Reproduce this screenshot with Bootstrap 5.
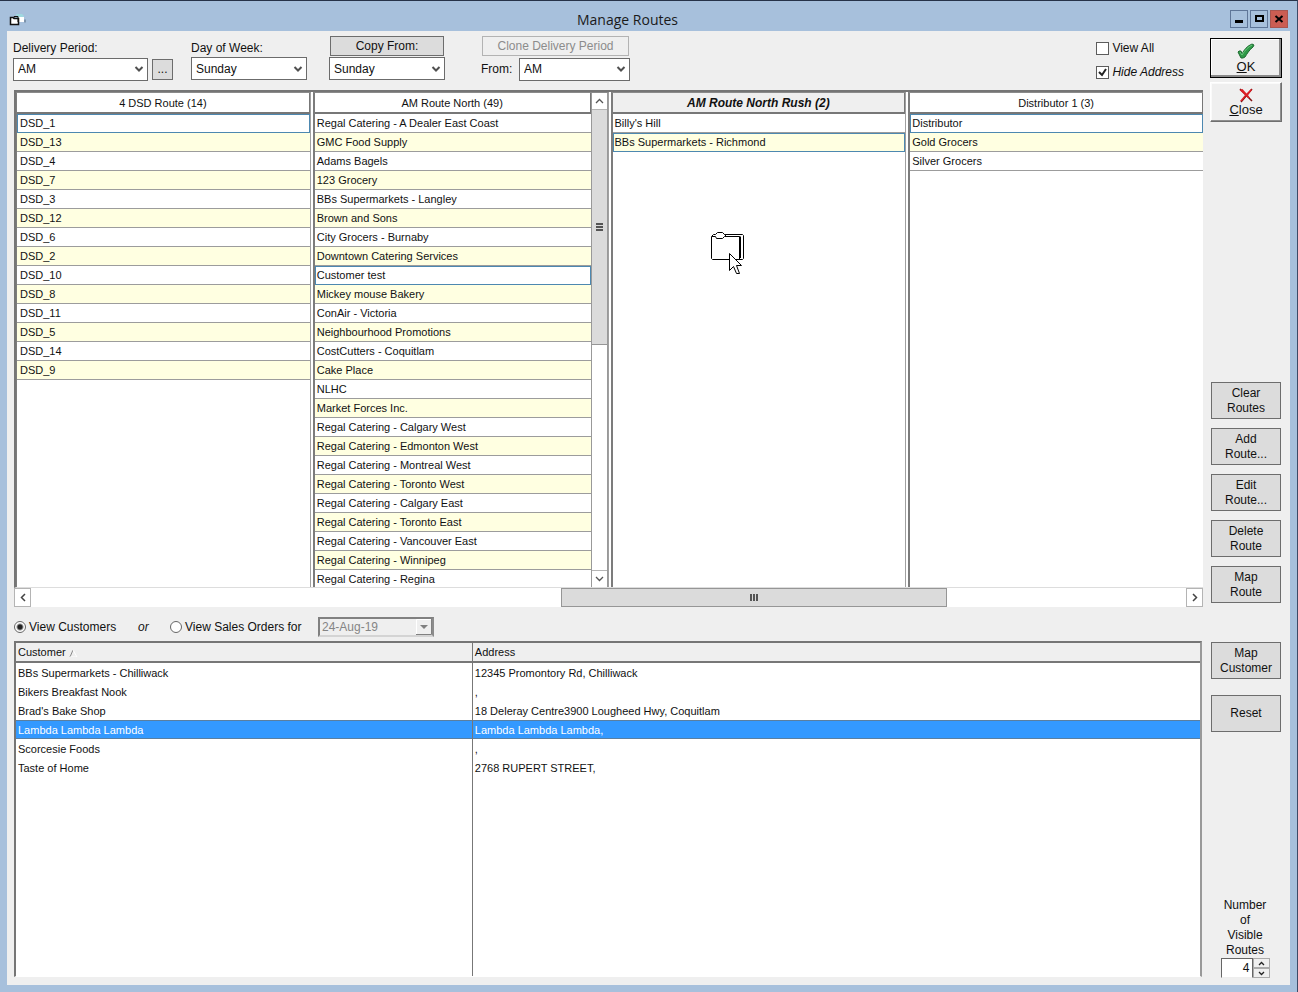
<!DOCTYPE html>
<html lang="en">
<head>
<meta charset="utf-8">
<meta name="viewport" content="width=device-width, initial-scale=1">
<title>Manage Routes</title>
<link href="https://cdn.jsdelivr.net/npm/bootstrap@5.3.0/dist/css/bootstrap.min.css" rel="stylesheet">
<style>
body { font-family: "Liberation Sans", Arial, sans-serif; font-size: 12px; line-height: 15px; color: #111; background: #a7c0dc; }
.app-window { height: 100vh; min-height: 720px; border-top: 1px solid #263248; border-right: 1px solid #3d4a66; padding: 0 7px 7px 7px; }
.title-bar { height: 30px; flex: none; padding: 7px 42px 0 0; }
.title-text { font: 400 14px/20px "Open Sans", sans-serif; color: #1a1a1a; }
.app-icon { left: 2px; top: 12px; }
.win-controls { right: 2px; top: 9px; gap: 2px; }
.win-btn { width: 18px; height: 18px; padding: 0; border: 1px solid #5f7698; background: transparent; display: flex; align-items: center; justify-content: center; }
.win-close { background: #cb5d52; border-color: #a8554f; }
.client { background: #efefef; min-height: 0; }
.upper { flex: 576 1 0; }
.lower { flex: 378 1 0; }
.upper-main { padding-left: 7px; }
.lower-main { padding: 0 0 8px 7px; }
.side { width: 87px; flex: none; padding: 0 8px 0 7px; }
.upper .side { padding-top: 7px; padding-bottom: 4px; }
.lower .side { padding-top: 35px; padding-bottom: 7px; }
.route-actions { gap: 9px; }

.tool-strip { height: 59px; flex: none; padding: 5px 19px 0 6px; margin-left: -7px; }
.tool-group { display: grid; grid-template-rows: 20px 24px; row-gap: 1px; }
.tool-group > label { padding-top: 5px; }
.period-group { width: 178px; }
.day-group { width: 138px; }
.copy-group { width: 152px; }
.copy-btn { width: 114px; margin-left: 1px; }
.clone-btn { width: 147px; margin-left: 1px; }
.more-btn { width: 21px; height: 21px; }
.w-period { width: 135px; }
.w-day { width: 116px; }
.w-from { width: 111px; }
.from-line { width: 149px; }
.form-select.pick { font-size: 12px; line-height: 16px; height: 23px; padding: 0 20px 0 4px; border: 1px solid #6b6b6b; border-radius: 0; color: #111; background-color: #fff;
  background-position: right 2px center; background-size: 12px 12px;
  background-image: url("data:image/svg+xml,%3csvg xmlns='http://www.w3.org/2000/svg' viewBox='0 0 12 12'%3e%3cpath d='M2.5 4l3.5 3.5L9.5 4' fill='none' stroke='%23505050' stroke-width='2'/%3e%3c/svg%3e"); }
.grey-btn { font-size: 12px; line-height: 15px; padding: 0; color: #111; background: #dcdcdc; border: 1px solid #6d6d6d; border-radius: 0; }
.grey-btn:disabled { color: #8c8c8c; background: #efefef; border-color: #b3b3b3; opacity: 1; }
.checks { gap: 9px; padding-top: 5px; }
.mark-label { display: flex; align-items: center; gap: 3px; }
.tick { appearance: none; width: 13px; height: 13px; margin: 0; border: 1px solid #5c5c5c; background: #fff center/11px no-repeat; flex: none; }
.tick:checked { background-image: url("data:image/svg+xml,%3csvg xmlns='http://www.w3.org/2000/svg' viewBox='0 0 11 11'%3e%3cpath d='M2 5l3 3L9 2' fill='none' stroke='%23222' stroke-width='2'/%3e%3c/svg%3e"); }
.dot { appearance: none; width: 12px; height: 12px; margin: 0; border: 1px solid #666; border-radius: 50%; background: #fff; flex: none; }
.dot:checked { background: radial-gradient(circle, #222 2px, #fff 4px); }

.routes { flex: 1 1 0; border-top: 2px solid #757575; border-left: 2px solid #757575; border-bottom: 1px solid #ddd; background: #fff; }
.route { flex: 1 1 0; min-width: 0; border-left: 2px solid #7c7c7c; border-top: 1px solid #8a8a8a; border-right: 1px solid #a0a0a0; }
.route:first-child { border-left-width: 1px; }
.route + .route { margin-left: 2px; }
.route:last-child { border-right: 0; }
.grid-table { width: 100%; table-layout: fixed; border-collapse: separate; border-spacing: 0; font-size: 11px; line-height: 18px; }
.grid-table th, .grid-table td { padding: 0 2px; height: 19px; white-space: nowrap; overflow: hidden; }
.route-table td { border-bottom: 1px solid #9c9c9c; background: #fff; }
.route:first-child td { padding-left: 3px; }
.route-table tbody tr:nth-child(even) td { background: #ffffe1; }
.route-table th { height: 21px; text-align: center; font-weight: 400; border: 1px solid #777; border-width: 0 1px 2px 0; }
.route-table .target { font-size: 12px; font-weight: 700; font-style: italic; background: #efefef; }
.route-table .picked { border-bottom-color: #4d88b0; box-shadow: inset 1px 1px #4d88b0, inset -1px 0 #4d88b0; }
.drag-cursor { left: 97px; top: 138px; pointer-events: none; }

.v-scroll { width: 17px; flex: none; border: 1px solid #999; border-width: 0 1px; }
.h-scroll { height: 19px; flex: none; background: #fff; }
.scroll-btn { padding: 0; border: 1px solid #b4b4b4; background: #fff; display: flex; align-items: center; justify-content: center; flex: none; }
.v-scroll .scroll-btn { height: 17px; border-width: 0 0 1px; }
.v-scroll .scroll-btn:last-child { border-width: 1px 0 0; }
.h-scroll .scroll-btn { width: 17px; }
.thumb { background: #dbdbdb; border: 1px solid #969696; display: flex; align-items: center; justify-content: center; }
.v-scroll .thumb { border-width: 0 0 1px; flex: 235 1 0; }
.v-scroll .rest { flex: 226 1 0; }
.h-scroll .before { flex: 531 1 0; }
.h-scroll .thumb { flex: 385 1 0; }
.h-scroll .after { flex: 239 1 0; }

.mode-bar { height: 34px; flex: none; padding-top: 6px; }
.mode-customers { width: 124px; }
.mode-or { width: 32px; }
.mode-orders { width: 148px; }
.date-pick.form-select { width: 116px; height: 20px; font-size: 12px; line-height: 15px; padding: 0 18px 0 2px; color: #858585; background-color: #efefef; border: 2px solid; border-color: #808080 #8c8c8c #d4d4d4 #808080; border-radius: 0; opacity: 1;
  background-position: right 0 center; background-size: 16px 16px;
  background-image: url("data:image/svg+xml,%3csvg xmlns='http://www.w3.org/2000/svg' viewBox='0 0 16 16'%3e%3cpath d='M0 0h16v16H0z' fill='%23efefef'/%3e%3cpath d='M0 15.5h15.5V0' fill='none' stroke='%23808080'/%3e%3cpath d='M.5 15V.5H15' fill='none' stroke='%23fff'/%3e%3cpath d='M4 6h8l-4 4z' fill='%23808080'/%3e%3c/svg%3e"); }
.customers { border-top: 2px solid #757575; border-left: 2px solid #757575; border-right: 2px solid #999; border-bottom: 1px solid #fff; margin-right: 1px; background: #fff;
  background-image: linear-gradient(90deg, transparent 38.5%, #777 38.5%, #777 calc(38.5% + 1px), transparent 0); }
.grid-table.cust-table th { font-weight: 400; height: 20px; padding-top: 1px; line-height: 17px; background: #efefef; border-bottom: 2px solid #777; }
.cust-table th:first-child, .cust-table td:first-child { width: 38.5%; }
.cust-table th + th, .cust-table td + td { border-left: 1px solid #777; }
.grid-table.cust-table .selected td { background: #3399ff; color: #fff; box-shadow: inset 0 1px #5b7f9f, inset 0 -1px #5b7f9f; }

.raised { height: 40px; padding: 0; font-size: 13px; line-height: 14px; color: #111; background: #efefef; border: 1px solid; border-color: #fff #6f6f6f #6f6f6f #fff; border-radius: 0; box-shadow: inset -1px -1px #8e8e8e, inset 1px 1px #fafafa; display: flex; flex-direction: column; align-items: center; justify-content: center; }
.raised + .raised { margin-top: 4px; }
.raised.main-action { border-color: #000; box-shadow: inset -2px -2px #8a8a8a, inset 1px 1px #fff; }
.side .grey-btn { height: 37px; margin: 0 1px; }
.visible-count { text-align: center; padding-right: 2px; }
.count-input { width: 32px; height: 20px; padding: 0 2px; text-align: right; font-size: 12px; color: #111; border: 1px solid; border-color: #666 #666 #eee #666; background: #fff; border-radius: 0; }
.spin { width: 17px; height: 10px; padding: 0; border: 1px solid #aaa; background: #efefef; display: flex; align-items: center; justify-content: center; }
</style>
</head>
<body>
<div class="app-window d-flex flex-column">
  <header class="title-bar position-relative d-flex align-items-center justify-content-center">
    <svg class="app-icon position-absolute" width="18" height="14" viewBox="0 0 18 14"><path d="M7 1h6l2 2v5H9z" fill="#9fd8e0"/><path d="M9 4h6v5h-5z" fill="#fff"/><path d="M1.5 4.500H4l1 1h4.500v6h-8z" fill="#fff" stroke="#111" stroke-width="1.500"/><path d="M5 5V3.500h4V9" fill="none" stroke="#111"/><path d="M16 6.500v3" stroke="#7d93ab" stroke-width="2"/></svg>
    <div class="title-text">Manage Routes</div>
    <div class="win-controls position-absolute d-flex">
      <button class="win-btn" aria-label="Minimize"><svg width="12" height="12"><path d="M2 7h8v3H2z"/></svg></button>
      <button class="win-btn" aria-label="Maximize"><svg width="12" height="12"><path d="M3 3h7v5H3z" fill="none" stroke="#000" stroke-width="2"/></svg></button>
      <button class="win-btn win-close" aria-label="Close window"><svg width="12" height="12"><path d="M2.500 3l7 6M9.500 3l-7 6" stroke="#000" stroke-width="2"/></svg></button>
    </div>
  </header>

  <div class="client d-flex flex-column flex-grow-1">
    <div class="upper d-flex overflow-hidden">
      <main class="upper-main flex-grow-1 d-flex flex-column overflow-hidden">
        <div class="tool-strip d-flex">
          <div class="tool-group period-group">
            <label for="period">Delivery Period:</label>
            <div class="d-flex align-items-center gap-1">
              <select id="period" class="form-select pick w-period"><option>AM</option></select>
              <button class="btn grey-btn more-btn">...</button>
            </div>
          </div>
          <div class="tool-group day-group">
            <label for="day">Day of Week:</label>
            <select id="day" class="form-select pick w-day"><option>Sunday</option></select>
          </div>
          <div class="tool-group copy-group">
            <button class="btn grey-btn copy-btn">Copy From:</button>
            <select class="form-select pick w-day" aria-label="Copy from day"><option>Sunday</option></select>
          </div>
          <div class="tool-group">
            <button class="btn grey-btn clone-btn" disabled>Clone Delivery Period</button>
            <div class="from-line d-flex align-items-center justify-content-between">
              <label for="from">From:</label>
              <select id="from" class="form-select pick w-from"><option>AM</option></select>
            </div>
          </div>
          <div class="checks ms-auto d-flex flex-column">
            <label class="mark-label"><input type="checkbox" class="tick">View All</label>
            <label class="mark-label fst-italic"><input type="checkbox" class="tick" checked>Hide Address</label>
          </div>
        </div>

        <div class="routes d-flex overflow-hidden">
          <section class="route">
            <table class="grid-table route-table">
              <thead><tr><th>4 DSD Route (14)</th></tr></thead>
              <tbody>
                <tr><td class="picked">DSD_1</td></tr>
                <tr><td>DSD_13</td></tr>
                <tr><td>DSD_4</td></tr>
                <tr><td>DSD_7</td></tr>
                <tr><td>DSD_3</td></tr>
                <tr><td>DSD_12</td></tr>
                <tr><td>DSD_6</td></tr>
                <tr><td>DSD_2</td></tr>
                <tr><td>DSD_10</td></tr>
                <tr><td>DSD_8</td></tr>
                <tr><td>DSD_11</td></tr>
                <tr><td>DSD_5</td></tr>
                <tr><td>DSD_14</td></tr>
                <tr><td>DSD_9</td></tr>
              </tbody>
            </table>
          </section>
          <section class="route d-flex">
            <div class="flex-grow-1 overflow-hidden">
            <table class="grid-table route-table">
              <thead><tr><th>AM Route North (49)</th></tr></thead>
              <tbody>
                <tr><td>Regal Catering - A Dealer East Coast</td></tr>
                <tr><td>GMC Food Supply</td></tr>
                <tr><td>Adams Bagels</td></tr>
                <tr><td>123 Grocery</td></tr>
                <tr><td>BBs Supermarkets - Langley</td></tr>
                <tr><td>Brown and Sons</td></tr>
                <tr><td>City Grocers - Burnaby</td></tr>
                <tr><td>Downtown Catering Services</td></tr>
                <tr><td class="picked">Customer test</td></tr>
                <tr><td>Mickey mouse Bakery</td></tr>
                <tr><td>ConAir - Victoria</td></tr>
                <tr><td>Neighbourhood Promotions</td></tr>
                <tr><td>CostCutters - Coquitlam</td></tr>
                <tr><td>Cake Place</td></tr>
                <tr><td>NLHC</td></tr>
                <tr><td>Market Forces Inc.</td></tr>
                <tr><td>Regal Catering - Calgary West</td></tr>
                <tr><td>Regal Catering - Edmonton West</td></tr>
                <tr><td>Regal Catering - Montreal West</td></tr>
                <tr><td>Regal Catering - Toronto West</td></tr>
                <tr><td>Regal Catering - Calgary East</td></tr>
                <tr><td>Regal Catering - Toronto East</td></tr>
                <tr><td>Regal Catering - Vancouver East</td></tr>
                <tr><td>Regal Catering - Winnipeg</td></tr>
                <tr><td>Regal Catering - Regina</td></tr>
              </tbody>
            </table>
            </div>
            <div class="v-scroll d-flex flex-column">
              <button class="scroll-btn" aria-label="Scroll up"><svg width="9" height="6"><path d="M1 5l3.500-3.500L8 5" fill="none" stroke="#555" stroke-width="1.300"/></svg></button>
              <div class="thumb"><svg width="7" height="8"><path d="M0 1h7M0 4h7M0 7h7" stroke="#555" stroke-width="2"/></svg></div>
              <div class="rest"></div>
              <button class="scroll-btn" aria-label="Scroll down"><svg width="9" height="6"><path d="M1 1l3.500 3.500L8 1" fill="none" stroke="#555" stroke-width="1.300"/></svg></button>
            </div>
          </section>
          <section class="route position-relative">
            <table class="grid-table route-table">
              <thead><tr><th class="target">AM Route North Rush (2)</th></tr></thead>
              <tbody>
                <tr><td>Billy's Hill</td></tr>
                <tr><td class="picked">BBs Supermarkets - Richmond</td></tr>
              </tbody>
            </table>
            <svg class="drag-cursor position-absolute" width="36" height="44" viewBox="0 0 36 44" fill="#fff" stroke="#000"><path d="M14 3.500H32.500L33.500 4.500V27.500l-1 1H25"/><path d="M1.500 5.500L3.500 3.500H5.500L7.500 1.500H12.500L14.500 3.500H15.500V5.500H29.500V28.500H2.500L1.500 27.500z"/><path d="M2 5.500H5.500L6.500 7.500H12.500L14.500 5.500H29.500M30.500 5.500V27" fill="none"/><path d="M19.500 22.500V39.500L23.500 35.500L26.500 42.500H29.500L26.500 34.500H31.500z"/></svg>
          </section>
          <section class="route">
            <table class="grid-table route-table">
              <thead><tr><th>Distributor 1 (3)</th></tr></thead>
              <tbody>
                <tr><td class="picked">Distributor</td></tr>
                <tr><td>Gold Grocers</td></tr>
                <tr><td>Silver Grocers</td></tr>
              </tbody>
            </table>
          </section>
        </div>
        <div class="h-scroll d-flex">
          <button class="scroll-btn" aria-label="Scroll left"><svg width="6" height="9"><path d="M5 1L1.500 4.500L5 8" fill="none" stroke="#444" stroke-width="1.500"/></svg></button>
          <div class="before"></div>
          <div class="thumb"><svg width="8" height="7"><path d="M1 0v7M4 0v7M7 0v7" stroke="#555" stroke-width="2"/></svg></div>
          <div class="after"></div>
          <button class="scroll-btn" aria-label="Scroll right"><svg width="6" height="9"><path d="M1 1l3.500 3.500L1 8" fill="none" stroke="#444" stroke-width="1.500"/></svg></button>
        </div>
      </main>
      <aside class="side d-flex flex-column">
        <button class="btn raised main-action"><svg width="18" height="17" viewBox="0 0 18 17"><path d="M1 9l1-1h2l1 3C7 7 10 3 15 1l2 1-1 2C12 7 10 11 8 14l-2 1H4z" fill="#2f9a48" stroke="#1d6b30"/><path d="M3 9l2 3C8 7 11 4 15 2" fill="none" stroke="#6cc97e"/></svg><span><u>O</u>K</span></button>
        <button class="btn raised"><svg width="16" height="16" viewBox="0 0 16 16"><path d="M2 2l12 12M14 2L3 15" stroke="#801010" stroke-width="1.500"/><path d="M1.500 3l3-1 4 4.500L13 2l1 1-4 5 2 3-2 0-2-2-4 5-2 0 5-6z" fill="#dd1f26"/></svg><span><u>C</u>lose</span></button>
        <div class="route-actions mt-auto d-grid">
          <button class="btn grey-btn">Clear<br>Routes</button>
          <button class="btn grey-btn">Add<br>Route...</button>
          <button class="btn grey-btn">Edit<br>Route...</button>
          <button class="btn grey-btn">Delete<br>Route</button>
          <button class="btn grey-btn">Map<br>Route</button>
        </div>
      </aside>
    </div>

    <div class="lower d-flex overflow-hidden">
      <section class="lower-main flex-grow-1 d-flex flex-column overflow-hidden">
        <div class="mode-bar d-flex align-items-center">
          <label class="mark-label mode-customers"><input type="radio" name="mode" class="dot" checked>View Customers</label>
          <i class="mode-or">or</i>
          <label class="mark-label mode-orders"><input type="radio" name="mode" class="dot">View Sales Orders for</label>
          <select class="form-select date-pick" aria-label="Order date" disabled><option>24-Aug-19</option></select>
        </div>
        <div class="customers flex-grow-1 overflow-hidden">
          <table class="grid-table cust-table">
            <thead><tr><th>Customer <svg width="10" height="8" viewBox="0 0 10 8"><path d="M1 8l3-7" stroke="#888"/><path d="M4 1l4 7H1" fill="none" stroke="#fff"/></svg></th><th>Address</th></tr></thead>
            <tbody>
              <tr><td>BBs Supermarkets - Chilliwack</td><td>12345 Promontory Rd, Chilliwack</td></tr>
              <tr><td>Bikers Breakfast Nook</td><td>,</td></tr>
              <tr><td>Brad's Bake Shop</td><td>18 Deleray Centre3900 Lougheed Hwy, Coquitlam</td></tr>
              <tr class="selected"><td>Lambda Lambda Lambda</td><td>Lambda Lambda Lambda,</td></tr>
              <tr><td>Scorcesie Foods</td><td>,</td></tr>
              <tr><td>Taste of Home</td><td>2768 RUPERT STREET,</td></tr>
            </tbody>
          </table>
        </div>
      </section>
      <aside class="side d-flex flex-column">
        <button class="btn grey-btn">Map<br>Customer</button>
        <button class="btn grey-btn mt-3">Reset</button>
        <div class="visible-count mt-auto">
          <label for="count" class="d-block">Number<br>of<br>Visible<br>Routes</label>
          <div class="d-flex justify-content-center">
            <input id="count" class="count-input" value="4">
            <div>
              <button class="spin" aria-label="More routes"><svg width="7" height="5"><path d="M1 4l2.500-2.500L6 4" fill="none" stroke="#222" stroke-width="1.300"/></svg></button>
              <button class="spin" aria-label="Fewer routes"><svg width="7" height="5"><path d="M1 1l2.500 2.500L6 1" fill="none" stroke="#222" stroke-width="1.300"/></svg></button>
            </div>
          </div>
        </div>
      </aside>
    </div>
  </div>
</div>
<script src="https://cdn.jsdelivr.net/npm/bootstrap@5.3.0/dist/js/bootstrap.bundle.min.js"></script>
</body>
</html>
